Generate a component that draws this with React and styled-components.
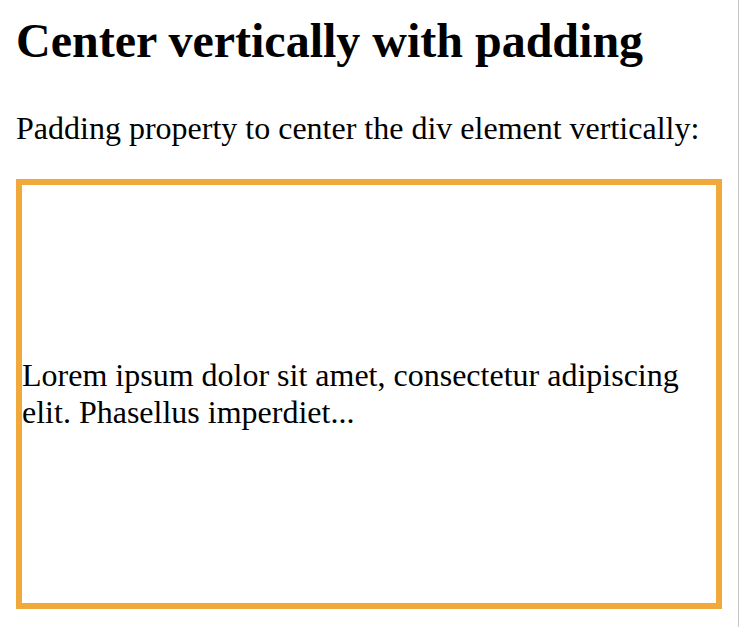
import React from "react";
import styled, { createGlobalStyle } from "styled-components";

const Global = createGlobalStyle`
  html { background: #ffffff; }
  body {
    margin: 0;
    font-family: "Liberation Serif", "Times New Roman", serif;
    color: #000;
  }
`;

const Page = styled.div`
  width: 706px;
  min-height: 627px;
  padding: 0 16px;
  border-right: 1px solid #c6c6c6;
  box-sizing: content-box;
  display: flex;
  flex-direction: column;
`;

const Title = styled.h1`
  margin: 13px 0 0;
  font-size: 48px;
  font-weight: 700;
  line-height: 55px;
`;

const Lead = styled.p`
  margin: 42px 0 0;
  font-size: 32px;
  line-height: 37px;
`;

const PaddedBox = styled.div`
  margin-top: 32px;
  border: 6px solid #f2a93b;
  padding: 172px 0;
  font-size: 32px;
  line-height: 37px;
`;

export default function App() {
  return (
    <>
      <Global />
      <Page>
        <Title>Center vertically with padding</Title>
        <Lead>Padding property to center the div element vertically:</Lead>
        <PaddedBox>
          Lorem ipsum dolor sit amet, consectetur adipiscing elit. Phasellus imperdiet...
        </PaddedBox>
      </Page>
    </>
  );
}
